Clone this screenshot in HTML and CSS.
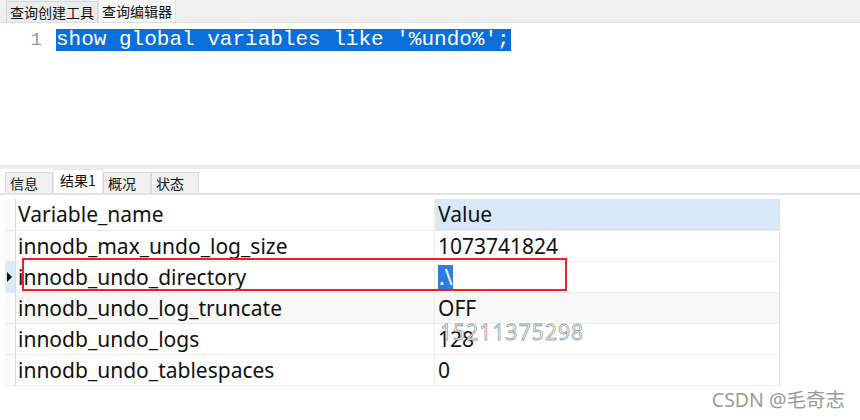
FILE: index.html
```html
<!DOCTYPE html>
<html>
<head>
<meta charset="utf-8">
<link rel="stylesheet" href="styles.css">
</head>
<body>
<div class="app">
  <div class="top-tabs">
    <div class="tab">查询创建工具</div>
    <div class="tab active">查询编辑器</div>
  </div>
  <div class="editor">
    <div class="gutter">1</div>
    <div class="code"><span class="sel">show global variables like '%undo%';</span></div>
  </div>
  <div class="splitter"></div>
  <div class="result-tabs">
    <div class="rtab">信息</div>
    <div class="rtab active">结果1</div>
    <div class="rtab">概况</div>
    <div class="rtab">状态</div>
  </div>
  <div class="grid-area">
    <div class="grid">
      <div class="row head">
        <div class="ind"></div>
        <div class="c1">Variable_name</div>
        <div class="c2 hl">Value</div>
      </div>
      <div class="row">
        <div class="ind"></div>
        <div class="c1">innodb_max_undo_log_size</div>
        <div class="c2">1073741824</div>
      </div>
      <div class="row current">
        <div class="ind"><span class="arrow"></span></div>
        <div class="c1">innodb_undo_directory</div>
        <div class="c2"><span class="cellsel">.\</span></div>
        <div class="redbox"></div>
      </div>
      <div class="row alt">
        <div class="ind"></div>
        <div class="c1">innodb_undo_log_truncate</div>
        <div class="c2">OFF</div>
      </div>
      <div class="row">
        <div class="ind"></div>
        <div class="c1">innodb_undo_logs</div>
        <div class="c2">128</div>
        <div class="wm">15211375298</div>
      </div>
      <div class="row">
        <div class="ind"></div>
        <div class="c1">innodb_undo_tablespaces</div>
        <div class="c2">0</div>
      </div>
    </div>
    <div class="credit">CSDN @毛奇志</div>
  </div>
</div>
</body>
</html>
```

FILE: styles.css
```css
html, body {
  margin: 0;
  padding: 0;
  background: #ffffff;
}
.app {
  width: 860px;
  height: 420px;
  overflow: hidden;
  display: flex;
  flex-direction: column;
  font-family: "Noto Sans", "Noto Sans CJK SC", sans-serif;
}
.top-tabs {
  height: 22px;
  background: #f0f0f0;
  border-bottom: 1px solid #dddddd;
  display: flex;
  padding-left: 6px;
  align-items: flex-end;
}
.tab {
  font-family: "Noto Sans CJK SC", sans-serif;
  font-size: 14px;
  line-height: 20px;
  padding: 0 3px;
  color: #111;
  border: 1px solid #d6d6d6;
  border-bottom: none;
  background: #ececec;
}
.tab.active {
  background: #f7f7f7;
  height: 22px;
  line-height: 22px;
  border-color: #e4e4e4;
}
.editor {
  height: 136px;
  display: flex;
  padding-top: 6px;
}
.gutter {
  width: 42px;
  text-align: right;
  font-family: "Liberation Mono", monospace;
  font-size: 19px;
  line-height: 22px;
  color: #9a9a9a;
  padding-right: 14px;
}
.code {
  font-family: "Liberation Mono", monospace;
  font-size: 21px;
  line-height: 22px;
  color: #fff;
  white-space: pre;
}
.sel {
  background: #0a6fd8;
  display: inline-block;
  padding: 0 1px 0 0;
}
.splitter {
  height: 3px;
  background: #eeeeee;
  border-top: 1px solid #e6e6e6;
}
.result-tabs {
  height: 24px;
  display: flex;
  align-items: flex-end;
  padding-left: 5px;
  border-bottom: 2px solid #e3e3e3;
}
.rtab {
  font-family: "Noto Sans CJK SC", sans-serif;
  font-size: 14px;
  line-height: 20px;
  height: 20px;
  padding: 0 4px;
  width: 38px;
  background: #f0f0f0;
  border: 1px solid #d9d9d9;
  border-bottom: none;
  color: #111;
}
.rtab.active {
  background: #ffffff;
  height: 23px;
  line-height: 21px;
  border-color: #e6e6e6;
  padding-left: 6px;
}
.grid-area {
  flex: 1;
  position: relative;
  padding-top: 4px;
  padding-left: 5px;
}
.grid {
  width: 775px;
}
.row {
  position: relative;
  display: flex;
  height: 30px;
  border-bottom: 1px solid #ececec;
  font-size: 21px;
  line-height: 30px;
  color: #111;
}
.row.head {
  height: 31px;
}
.row.alt {
  background: #f8f8f8;
}
.ind {
  width: 10px;
  border-right: 1px solid #dcdcdc;
  position: relative;
  background: #fafafa;
}
.row.current .ind {
  background: #dceaf7;
}
.arrow {
  position: absolute;
  left: 2px;
  top: 10px;
  width: 0;
  height: 0;
  border-top: 5px solid transparent;
  border-bottom: 5px solid transparent;
  border-left: 5px solid #111;
}
.c1 {
  width: 416px;
  padding-left: 2px;
  border-right: 1px solid #ececec;
  white-space: nowrap;
}
.c2 {
  flex: 1;
  padding-left: 3px;
  border-right: 1px solid #e2e2e2;
}
.c2.hl {
  background: #d9e9f9;
  border-bottom: 1px solid #cfdff0;
}
.cellsel {
  background: #2b7fdc;
  color: #fff;
  display: inline-block;
  line-height: 25px;
  padding: 0 1px;
  margin-top: 3px;
  vertical-align: top;
}
.redbox {
  position: absolute;
  left: 17px;
  top: -4px;
  width: 541px;
  height: 29px;
  border: 2px solid #e8202a;
  pointer-events: none;
}
.wm {
  position: absolute;
  left: 435px;
  top: -7px;
  font-family: "Noto Sans", sans-serif;
  font-size: 21px;
  color: rgba(255,255,255,0.95);
  -webkit-text-stroke: 0.8px rgba(120,120,120,0.75);
  letter-spacing: 1.1px;
}
.credit {
  position: absolute;
  right: 15px;
  bottom: 7px;
  font-family: "Noto Sans", "Noto Sans CJK SC", sans-serif;
  font-size: 19.5px;
  color: #9a9a9a;
}
```
